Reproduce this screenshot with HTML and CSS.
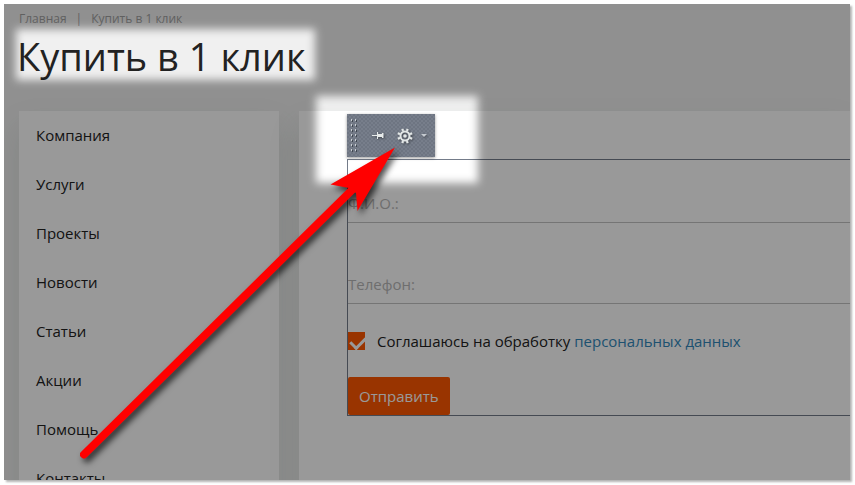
FILE: index.html
```html
<!DOCTYPE html>
<html lang="ru">
<head>
  <meta charset="UTF-8">
  <meta name="viewport" content="width=device-width, initial-scale=1.0">
  <title>Купить в 1 клик</title>
  <link rel="stylesheet" href="styles.css">
</head>
<body>
  <div class="page">
    <nav class="breadcrumbs">
      <a href="#">Главная</a>
      <span>|</span>
      <span>Купить в 1 клик</span>
    </nav>
    <h1>Купить в 1 клик</h1>

    <div class="columns">
      <nav class="menu">
        <a href="#">Компания</a>
        <a href="#">Услуги</a>
        <a href="#">Проекты</a>
        <a href="#">Новости</a>
        <a href="#">Статьи</a>
        <a href="#">Акции</a>
        <a href="#">Помощь</a>
        <a href="#">Контакты</a>
      </nav>

      <main class="content">
        <form class="order-form">
          <div class="toolbar">
            <svg class="grip" width="6" height="34" viewBox="0 0 6 34">
              <path d="M1.500 1V34M5.500 1V34" stroke="#3f4650" stroke-width="1" stroke-dasharray="2 3"/>
              <path d="M.5 0V34M4.500 0V34" stroke="#c9ced3" stroke-width="1" stroke-dasharray="2 3"/>
            </svg>
            <button type="button" class="tool pin" aria-label="Закрепить">
              <svg width="12" height="9" viewBox="0 0 12 9">
                <path d="M0 4h5V1h1v2h4V2h1.500v5H10V6H6v2H5V5H0z" fill="#e6eaea"/>
              </svg>
            </button>
            <button type="button" class="tool gear" aria-label="Настройки">
              <svg width="16" height="16" viewBox="-8 -8 16 16">
                <g stroke="#e2e6e6" fill="none">
                  <circle r="4.5" stroke-width="2"/>
                  <path stroke-width="2.2" d="M1.900-5 2.700-7.200M5-1.900 7.200-2.700M5 1.900 7.200 2.700M1.900 5 2.700 7.200M-1.900 5-2.700 7.200M-5 1.900-7.200 2.700M-5-1.900-7.200-2.700M-1.900-5-2.700-7.200"/>
                </g>
                <circle r="1.8" fill="#e2e6e6"/>
              </svg>
            </button>
            <button type="button" class="tool more" aria-label="Ещё">
              <svg width="6" height="3" viewBox="0 0 6 3">
                <path d="M0 0h6L3 3z" fill="#c5cad0"/>
              </svg>
            </button>
          </div>

          <input class="field" type="text" name="name" placeholder="Ф.И.О.:" aria-label="Ф.И.О.">
          <input class="field" type="tel" name="phone" placeholder="Телефон:" aria-label="Телефон">
          <div class="agree">
            <input type="checkbox" id="agree" checked>
            <label for="agree">Соглашаюсь на обработку <a href="#">персональных данных</a></label>
          </div>
          <button type="submit" class="submit">Отправить</button>
        </form>
      </main>
    </div>

    <!-- затемнение с подсвеченными областями и стрелка -->
    <svg class="overlay" aria-hidden="true">
      <defs>
        <filter id="soft" filterUnits="userSpaceOnUse" x="0" y="0" width="600" height="300">
          <feGaussianBlur stdDeviation="4"/>
        </filter>
        <mask id="spots" maskUnits="userSpaceOnUse" x="0" y="0" width="100%" height="100%">
          <rect width="100%" height="100%" fill="#fff"/>
          <g filter="url(#soft)">
            <rect x="12" y="25" width="299" height="51"/>
            <rect x="312" y="92" width="162" height="87"/>
          </g>
        </mask>
      </defs>
      <rect width="100%" height="100%" fill="#000" fill-opacity=".4" mask="url(#spots)"/>
      <g class="arrow">
        <path d="M80 450.500 350 184" stroke="#f00" stroke-width="8" stroke-linecap="round"/>
        <path d="M391 143.500 326.500 180.500 345 184 352 189 353.500 207z" fill="#f00"/>
      </g>
    </svg>
  </div>
</body>
</html>
```
FILE: styles.css
```css
* {
  box-sizing: border-box;
}

body {
  margin: 0;
  padding: 4px 5px 5px 4px;
  background: #fff;
  color: #222;
  font-family: "Open Sans", "Noto Sans", sans-serif;
  font-size: 15px;
}

a {
  color: inherit;
  text-decoration: none;
}

.page {
  position: relative;
  height: calc(100vh - 9px);
  padding: 5px 0 0 15px;
  overflow: hidden;
  background: #f0f0f0;
}

body::after {
  content: "";
  position: absolute;
  inset: 4px 5px 5px 4px;
  box-shadow: 2px 2px 2px rgba(0, 0, 0, 0.3);
  pointer-events: none;
}

.breadcrumbs {
  display: flex;
  gap: 9px;
  color: #a0a0a0;
  font-size: 12px;
  line-height: 20px;
}

h1 {
  margin: 0 0 28px -2px;
  font-size: 38px;
  font-weight: 400;
  line-height: 54px;
}

.columns {
  display: flex;
  gap: 20px;
}

.menu,
.content {
  background: #fff;
  box-shadow: 0 16px 30px rgba(90, 120, 105, 0.14);
}

.menu {
  display: flex;
  flex-direction: column;
  flex: 0 0 260px;
  padding-bottom: 20px;
}

.menu a {
  padding-left: 17px;
  line-height: 49px;
}

.content {
  flex: 1;
  padding: 48px 0 80px 48px;
}

.order-form {
  position: relative;
  border: 1px solid #747c8a;
  border-right: 0;
  padding-top: 28px;
}

.toolbar {
  position: absolute;
  top: -46px;
  left: -1px;
  display: flex;
  align-items: center;
  width: 88px;
  height: 43px;
  padding-left: 4px;
  background: #777e8b repeating-conic-gradient(#6e7582 0 25%, transparent 0 50%) 0 0 / 4px 4px;
  box-shadow: 0 1px 3px rgba(0, 0, 0, 0.4);
}

.tool {
  display: flex;
  padding: 0;
  border: 0;
  background: none;
  filter: drop-shadow(1px 1px 1px rgba(0, 0, 0, 0.4));
}

.pin {
  margin-left: 15px;
}

.gear {
  margin-left: 13px;
}

.more {
  margin-left: 8px;
}

.field {
  display: block;
  width: 100%;
  height: 35px;
  margin-bottom: 46px;
  padding: 0 0 4px;
  border: 0;
  border-bottom: 1px solid #c4c4c4;
  background: none;
  font: inherit;
}

.field::placeholder {
  color: #b8b8b8;
  opacity: 1;
}

.agree {
  display: flex;
  align-items: center;
  gap: 12px;
  margin: -21px 0 24px;
  line-height: 24px;
}

.agree input {
  appearance: none;
  position: relative;
  width: 17px;
  height: 18px;
  margin: 0;
  background: #ff5800;
}

.agree input:checked::after {
  content: "";
  position: absolute;
  top: 2px;
  left: 5px;
  width: 7px;
  height: 12px;
  border: solid #fff;
  border-width: 0 3px 3px 0;
  transform: rotate(45deg);
}

.agree a {
  color: #3388bb;
}

.submit {
  display: block;
  height: 38px;
  padding: 0 11px;
  border: 0;
  border-radius: 2px;
  background: #ff5800;
  color: #fff;
  font: inherit;
}

.overlay {
  position: absolute;
  top: 0;
  left: 0;
  width: 100%;
  height: 100%;
  pointer-events: none;
}

.arrow {
  filter: drop-shadow(3px 4px 3px rgba(0, 0, 0, 0.7));
}
```
